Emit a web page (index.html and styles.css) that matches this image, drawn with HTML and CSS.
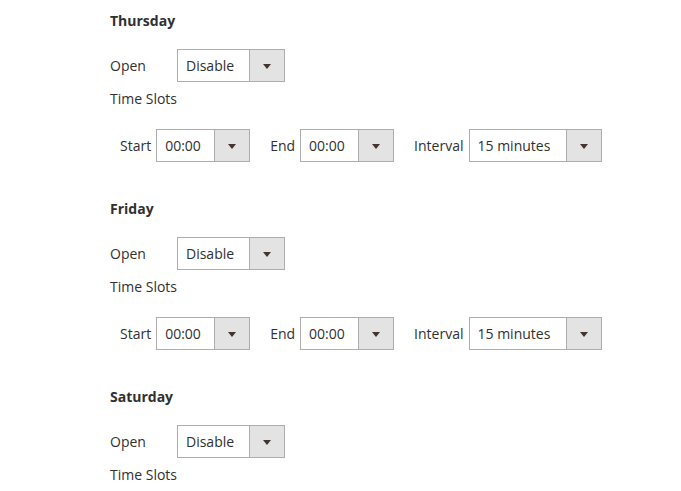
FILE: index.html
```html
<!DOCTYPE html>
<html>

<head>
    <link rel="stylesheet" href="styles.css">
</head>

<body>
    <div class="days">
        <div class="day">
            <h3 class="day-title">Thursday</h3>
            <div class="open-row">
                <span class="open-label">Open</span>
                <div class="pick pick-open"><span class="pick-value">Disable</span><span class="pick-btn"><i class="arrow"></i></span></div>
            </div>
            <div class="slots-label">Time Slots</div>
            <div class="slot-row">
                <span class="slot-label">Start</span>
                <div class="pick pick-time"><span class="pick-value">00:00</span><span class="pick-btn"><i class="arrow"></i></span></div>
                <span class="slot-label">End</span>
                <div class="pick pick-time"><span class="pick-value">00:00</span><span class="pick-btn"><i class="arrow"></i></span></div>
                <span class="slot-label">Interval</span>
                <div class="pick pick-interval"><span class="pick-value">15 minutes</span><span class="pick-btn"><i class="arrow"></i></span></div>
            </div>
        </div>

        <div class="day">
            <h3 class="day-title">Friday</h3>
            <div class="open-row">
                <span class="open-label">Open</span>
                <div class="pick pick-open"><span class="pick-value">Disable</span><span class="pick-btn"><i class="arrow"></i></span></div>
            </div>
            <div class="slots-label">Time Slots</div>
            <div class="slot-row">
                <span class="slot-label">Start</span>
                <div class="pick pick-time"><span class="pick-value">00:00</span><span class="pick-btn"><i class="arrow"></i></span></div>
                <span class="slot-label">End</span>
                <div class="pick pick-time"><span class="pick-value">00:00</span><span class="pick-btn"><i class="arrow"></i></span></div>
                <span class="slot-label">Interval</span>
                <div class="pick pick-interval"><span class="pick-value">15 minutes</span><span class="pick-btn"><i class="arrow"></i></span></div>
            </div>
        </div>

        <div class="day">
            <h3 class="day-title">Saturday</h3>
            <div class="open-row">
                <span class="open-label">Open</span>
                <div class="pick pick-open"><span class="pick-value">Disable</span><span class="pick-btn"><i class="arrow"></i></span></div>
            </div>
            <div class="slots-label">Time Slots</div>
        </div>
    </div>
</body>

</html>
```

FILE: styles.css
```css
body {
    margin: 0;
    background: #fff;
    font-family: "Open Sans", "Liberation Sans", sans-serif;
    font-size: 14px;
    color: #303030;
}

.days {
    padding: 11px 0 0 110px;
}

.day {
    margin-bottom: 37px;
}

.day-title {
    margin: 0;
    font-size: 14px;
    font-weight: 700;
    line-height: 20px;
    color: #303030;
}

.open-row {
    display: flex;
    align-items: center;
    margin-top: 18px;
}

.open-label {
    width: 67px;
}

.slots-label {
    margin-top: 7px;
    line-height: 20px;
}

.slot-row {
    display: flex;
    align-items: center;
    margin-top: 20px;
    padding-left: 10px;
}

.slot-label {
    margin-right: 5px;
}

.pick + .slot-label {
    margin-left: 20px;
}

.pick {
    display: flex;
    height: 33px;
    box-sizing: border-box;
    border: 1px solid #adadad;
    background: #fff;
}

.pick-open {
    width: 108px;
}

.pick-time {
    width: 94px;
}

.pick-interval {
    width: 133px;
}

.pick-value {
    flex: 1;
    padding-left: 8px;
    line-height: 31px;
    color: #303030;
}

.pick-btn {
    width: 34px;
    border-left: 1px solid #adadad;
    background: #e3e3e3;
    display: flex;
    align-items: center;
    justify-content: center;
}

.arrow {
    width: 0;
    height: 0;
    border-left: 4px solid transparent;
    border-right: 4px solid transparent;
    border-top: 5px solid #41362f;
    margin-top: 1px;
}
```
